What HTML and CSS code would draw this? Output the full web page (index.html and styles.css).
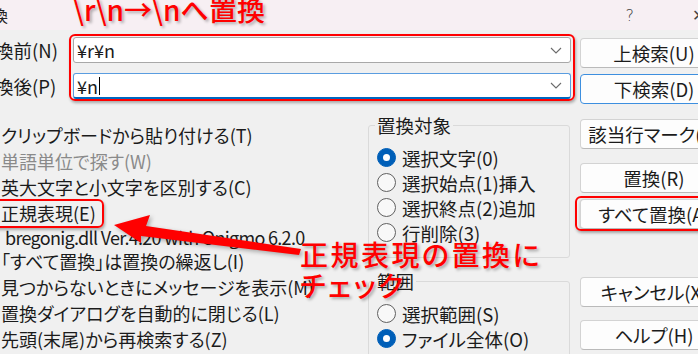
FILE: index.html
```html
<!DOCTYPE html>
<html lang="ja">
<head>
  <meta charset="UTF-8">
  <meta name="viewport" content="width=device-width, initial-scale=1.0">
  <title>置換</title>
  <link rel="stylesheet" href="styles.css">
</head>
<body>
  <div class="dialog">
    <!-- Title bar -->
    <div class="titlebar">
      <span class="title">換</span>
      <span class="help">?</span>
      <span class="close">✕</span>
    </div>

    <div class="content">
      <div class="main">
        <div class="field">
          <span class="field-label">換前(N)</span>
          <div class="combo">
            <span class="value">¥r¥n</span>
            <svg class="chevron" width="12" height="7" viewBox="0 0 12 7"><path d="M1 1l5 5 5-5" fill="none" stroke="#6b6b6b" stroke-width="1.1"/></svg>
          </div>
        </div>
        <div class="field">
          <span class="field-label">換後(P)</span>
          <div class="combo focus">
            <span class="value">¥n<span class="caret"></span></span>
            <svg class="chevron" width="12" height="7" viewBox="0 0 12 7"><path d="M1 1l5 5 5-5" fill="none" stroke="#6b6b6b" stroke-width="1.1"/></svg>
          </div>
        </div>

        <div class="lower">
          <ul class="options">
            <li>クリップボードから貼り付ける(T)</li>
            <li class="disabled">単語単位で探す(W)</li>
            <li>英大文字と小文字を区別する(C)</li>
            <li>正規表現(E)</li>
            <li class="note">bregonig.dll Ver.4.20 with Onigmo 6.2.0</li>
            <li>「すべて置換」は置換の繰返し(I)</li>
            <li>見つからないときにメッセージを表示(M)</li>
            <li>置換ダイアログを自動的に閉じる(L)</li>
            <li>先頭(末尾)から再検索する(Z)</li>
          </ul>

          <div class="groups">
            <fieldset class="group">
              <legend>置換対象</legend>
              <div class="radio-row"><span class="radio on"></span>選択文字(0)</div>
              <div class="radio-row"><span class="radio"></span>選択始点(1)挿入</div>
              <div class="radio-row"><span class="radio"></span>選択終点(2)追加</div>
              <div class="radio-row"><span class="radio"></span>行削除(3)</div>
            </fieldset>
            <fieldset class="group">
              <legend>範囲</legend>
              <div class="radio-row"><span class="radio"></span>選択範囲(S)</div>
              <div class="radio-row"><span class="radio on"></span>ファイル全体(O)</div>
            </fieldset>
          </div>
        </div>
      </div>

      <div class="buttons">
        <div class="btn">上検索(U)</div>
        <div class="btn default">下検索(D)</div>
        <div class="btn space-15">該当行マーク(K)</div>
        <div class="btn space-14">置換(R)</div>
        <div class="btn raised">すべて置換(A)</div>
        <div class="btn space-48">キャンセル(X)</div>
        <div class="btn space-13">ヘルプ(H)</div>
      </div>
    </div>

    <!-- Annotations -->
    <div class="mark mark-inputs"></div>
    <div class="mark mark-regex"></div>
    <div class="mark mark-replace-all"></div>
    <div class="note-title">\r\n→\nへ置換</div>
    <div class="note-check">正規表現の置換に<br>チェック</div>
    <svg class="arrow" width="698" height="354" viewBox="0 0 698 354">
      <polygon points="114,225 150,215 146,226 301,249 299,255 141,236 141,243" fill="#ff0000"/>
    </svg>
  </div>
</body>
</html>
```

FILE: styles.css
```css
body {
  margin: 0;
  width: 698px;
  height: 354px;
  overflow: hidden;
  background-color: #f0f0f0;
  color: #1b1b1b;
  font-family: "Noto Sans CJK JP", "Noto Sans", sans-serif;
  font-size: 18.5px;
  font-feature-settings: "palt";
}

.dialog {
  position: relative;
  width: 698px;
  height: 354px;
}

.titlebar {
  height: 30px;
  background-color: #f7eff3;
  display: flex;
  align-items: center;
  font-size: 16px;
  color: #222;
}

.title {
  margin-left: -8px;
}

.help {
  margin-left: auto;
  margin-right: 58px;
  font-family: "DejaVu Sans", sans-serif;
  font-weight: 300;
  color: #444;
}

.close {
  width: 14px;
  margin-right: -8px;
  font-family: "DejaVu Sans", sans-serif;
  color: #444;
}

.content {
  display: flex;
  padding-top: 7px;
}

.main {
  width: 571px;
  flex: none;
}

.field {
  display: flex;
  align-items: center;
  height: 26px;
}

.field + .field {
  margin-top: 10px;
}

.field-label {
  width: 78px;
  margin-left: -5px;
  flex: none;
  white-space: nowrap;
}

.combo {
  width: 498px;
  height: 26px;
  box-sizing: border-box;
  border: 1px solid #a8a8a8;
  border-radius: 3px;
  background-color: #fff;
  display: flex;
  align-items: center;
  padding: 0 8px 0 3px;
  font-size: 18px;
}

.combo.focus {
  border-color: #5a9de0;
  border-bottom: 2px solid #0067c0;
}

.combo .value {
  flex: 1;
  display: flex;
  align-items: center;
  line-height: 1;
}

.caret {
  display: inline-block;
  width: 1px;
  height: 18px;
  margin-left: 1px;
  background-color: #000;
}

.lower {
  display: flex;
  margin-top: 16px;
}

.options {
  width: 367px;
  flex: none;
  list-style: none;
  margin: 0;
  padding: 7px 0 0 1px;
  font-size: 18px;
}

.options li {
  height: 26px;
  line-height: 26px;
  white-space: nowrap;
}

.options .disabled {
  color: #8a8a8a;
}

.options .note {
  height: 22px;
  line-height: 22px;
  padding-left: 4px;
  letter-spacing: -0.7px;
}

.groups {
  width: 202px;
  flex: none;
}

.group {
  margin: 0;
  border: 1px solid #dadada;
  border-radius: 3px;
  padding: 10px 8px 12px 8px;
}

.group + .group {
  margin-top: 13px;
}

.group legend {
  padding: 0 2px;
  margin-left: -2px;
  line-height: 20px;
}

.radio-row {
  display: flex;
  align-items: center;
  gap: 6px;
  height: 25px;
  white-space: nowrap;
}

.radio {
  width: 19px;
  height: 19px;
  box-sizing: border-box;
  border: 1px solid #606060;
  border-radius: 50%;
  background-color: #f8f8f8;
  flex: none;
  display: flex;
  align-items: center;
  justify-content: center;
}

.radio.on {
  background-color: #005fb8;
  border-color: #005fb8;
}

.radio.on::after {
  content: "";
  width: 7px;
  height: 7px;
  border-radius: 50%;
  background-color: #fff;
}

.buttons {
  width: 148px;
  flex: none;
  margin-left: 9px;
  margin-top: 1px;
  display: flex;
  flex-direction: column;
}

.btn {
  height: 30px;
  box-sizing: border-box;
  border: 1px solid #d3d3d3;
  border-bottom-color: #bababa;
  border-radius: 4px;
  background-color: #fdfdfd;
  display: flex;
  align-items: center;
  justify-content: center;
  white-space: nowrap;
}

.btn + .btn {
  margin-top: 6px;
}

.btn.default {
  border-color: #3d8fdf;
}

.btn.raised {
  box-shadow: 0 1px 3px rgba(0, 0, 0, 0.25);
}

.btn.space-15 { margin-top: 15px; }
.btn.space-14 { margin-top: 14px; }
.btn.space-48 { margin-top: 48px; }
.btn.space-13 { margin-top: 13px; }

/* red annotations drawn over the screenshot */
.mark {
  position: absolute;
  box-sizing: border-box;
  border: 2px solid #ff0000;
  border-radius: 6px;
  box-shadow: 1px 2px 3px rgba(0, 0, 0, 0.3);
}

.mark-inputs {
  left: 69px;
  top: 34px;
  width: 506px;
  height: 67px;
}

.mark-regex {
  left: -8px;
  top: 199px;
  width: 112px;
  height: 29px;
}

.mark-replace-all {
  left: 575px;
  top: 196px;
  width: 140px;
  height: 35px;
}

.note-title,
.note-check {
  position: absolute;
  color: #ff0000;
  white-space: nowrap;
  text-shadow: 2px 2px 3px rgba(0, 0, 0, 0.3);
  font-weight: 500;
}

.note-title {
  left: 73px;
  top: -5px;
  font-size: 28px;
  line-height: 28px;
}

.note-check {
  left: 300px;
  top: 239px;
  font-size: 28px;
  line-height: 31px;
  letter-spacing: 2.5px;
}

.arrow {
  position: absolute;
  left: 0;
  top: 0;
  pointer-events: none;
  filter: drop-shadow(2px 2px 2px rgba(0, 0, 0, 0.3));
}
```
